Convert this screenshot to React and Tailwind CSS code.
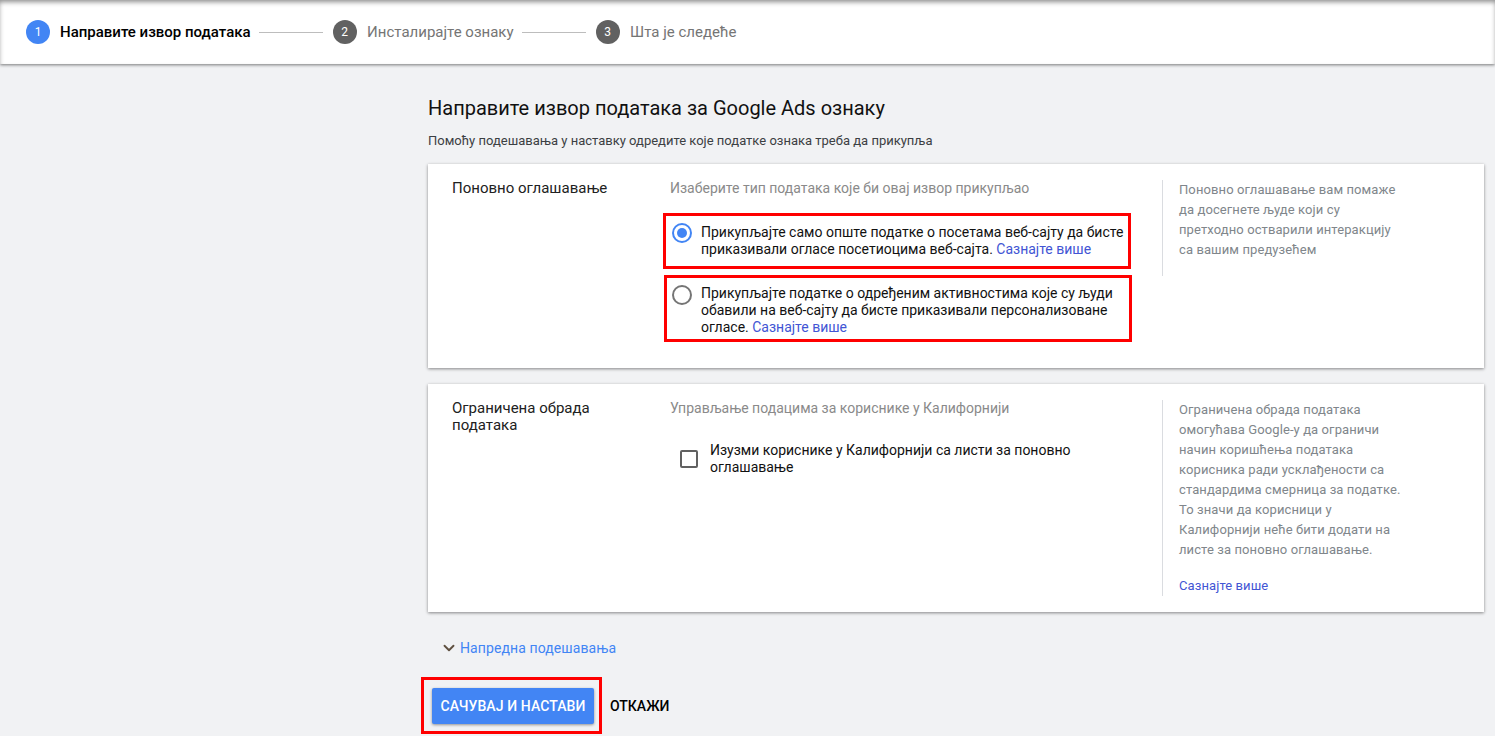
import { ChevronDown } from 'lucide-react';

function Step({ num, label, active }) {
  return (
    <div className="flex items-center">
      <span className={`w-6 h-6 rounded-full flex items-center justify-center text-xs text-white ${active ? 'bg-[#4285f4]' : 'bg-[#616161]'}`}>
        {num}
      </span>
      <span className={`text-[15px] ${active ? 'ml-[10px] font-medium text-black' : 'ml-[10.5px] text-[#757575]'}`}>{label}</span>
    </div>
  );
}

function Line() {
  return <div className="w-16 h-px bg-[#bdbdbd] ml-2 mr-[10px]" />;
}

function Link({ children }) {
  return <a className="text-[#4255d4]">{children}</a>;
}

function Card({ title, subtitle, help, className, children }) {
  return (
    <div className={`bg-white shadow-[0_1px_3px_rgba(0,0,0,0.45)] flex pt-4 pl-6 ${className}`}>
      <div className="w-[218px] pr-8 text-[15px] leading-[17px] text-[#212121]">{title}</div>
      <div className="w-[492px]">
        <div className="text-sm leading-[17px] text-[#8a8a8a]">{subtitle}</div>
        {children}
      </div>
      <div>{help}</div>
    </div>
  );
}

export default function App() {
  return (
    <div className="h-[736px] overflow-hidden bg-[#f1f2f4] font-['Roboto',sans-serif]" lang="sr">
      <header className="h-[64px] bg-white flex items-center pl-[26px] shadow-[inset_0_3px_5px_-1px_rgba(0,0,0,0.45),0_1px_3px_rgba(0,0,0,0.5)]">
        <Step num="1" label="Направите извор података" active />
        <Line />
        <Step num="2" label="Инсталирајте ознаку" />
        <Line />
        <Step num="3" label="Шта је следеће" />
      </header>

      <main className="ml-[428px] w-[1056px]">
        <h1 className="mt-[33px] text-xl leading-[22px] text-[#111]">Направите извор података за Google Ads ознаку</h1>
        <p className="mt-[14px] text-[13px] leading-4 text-[#3c4043]">
          Помоћу подешавања у наставку одредите које податке ознака треба да прикупља
        </p>

        <Card
          className="mt-[15px] h-[204px]"
          title="Поновно оглашавање"
          subtitle="Изаберите тип података које би овај извор прикупљао"
          help={
            <div className="w-[280px] h-[96px] border-l border-[#dadce0] pl-4 text-[13px] leading-5 tracking-[0.1px] text-[#80868b]">
              Поновно оглашавање вам помаже<br />да досегнете људе који су<br />претходно остварили интеракцију<br />са вашим предузећем
            </div>
          }
        >
          <div className="mt-4 -ml-[7px] w-[468px] h-[56px] border-[3px] border-[#ff0000] flex pl-[6px] pt-[5px]">
            <span className="mt-[2px] w-5 h-5 shrink-0 rounded-full border-2 border-[#4285f4] flex items-center justify-center">
              <span className="w-[10px] h-[10px] rounded-full bg-[#4285f4]" />
            </span>
            <p className="ml-[9px] mt-[3px] text-sm leading-[17px] text-[#111]">
              Прикупљајте само опште податке о посетама веб-сајту да бисте приказивали огласе посетиоцима веб-сајта. <Link>Сазнајте више</Link>
            </p>
          </div>
          <div className="mt-[6px] -ml-[6px] w-[468px] h-[67px] border-[3px] border-[#ff0000] flex pl-[5px] pt-[5px]">
            <span className="mt-[2px] w-5 h-5 shrink-0 rounded-full border-2 border-[#757575]" />
            <p className="ml-[9px] mt-[2px] text-sm leading-[17px] text-[#111]">
              Прикупљајте податке о одређеним активностима које су људи обавили на веб-сајту да бисте приказивали персонализоване огласе. <Link>Сазнајте више</Link>
            </p>
          </div>
        </Card>

        <Card
          className="mt-4 h-[228px]"
          title="Ограничена обрада података"
          subtitle="Управљање подацима за кориснике у Калифорнији"
          help={
            <div className="w-[280px] h-[196px] border-l border-[#dadce0] pl-4 text-[13px] leading-5 tracking-[0.1px] text-[#80868b]">
              Ограничена обрада података<br />омогућава Google-у да ограничи<br />начин коришћења података<br />корисника ради усклађености са<br />стандардима смерница за податке.<br />То значи да корисници у<br />Калифорнији неће бити додати на<br />листе за поновно оглашавање.
              <div className="mt-4"><Link>Сазнајте више</Link></div>
            </div>
          }
        >
          <div className="mt-[25px] ml-[10px] flex items-center">
            <span className="w-[18px] h-[18px] shrink-0 rounded-[2px] border-2 border-[#616161]" />
            <p className="ml-[12px] w-[400px] text-sm leading-[17px] text-[#111]">
              Изузми кориснике у Калифорнији са листи за поновно оглашавање
            </p>
          </div>
        </Card>

        <button className="mt-[26px] ml-[12px] flex items-center text-sm tracking-[0.1px] text-[#4285f4]">
          <ChevronDown size={18} strokeWidth={2.5} className="text-[#5f5040]" />
          <span className="ml-[2px]">Напредна подешавања</span>
        </button>

        <div className="mt-[19px] -ml-[7px] flex items-center">
          <div className="w-[181px] h-[57px] border-[3px] border-[#ff0000] flex items-center pl-2">
            <button className="w-[162px] h-9 rounded-[2px] bg-[#4285f4] text-white text-sm font-medium tracking-[0.1px] shadow-[0_1px_3px_rgba(0,0,0,0.4)]">
              САЧУВАЈ И НАСТАВИ
            </button>
          </div>
          <button className="ml-2 text-sm font-medium text-black">ОТКАЖИ</button>
        </div>
      </main>
    </div>
  );
}
